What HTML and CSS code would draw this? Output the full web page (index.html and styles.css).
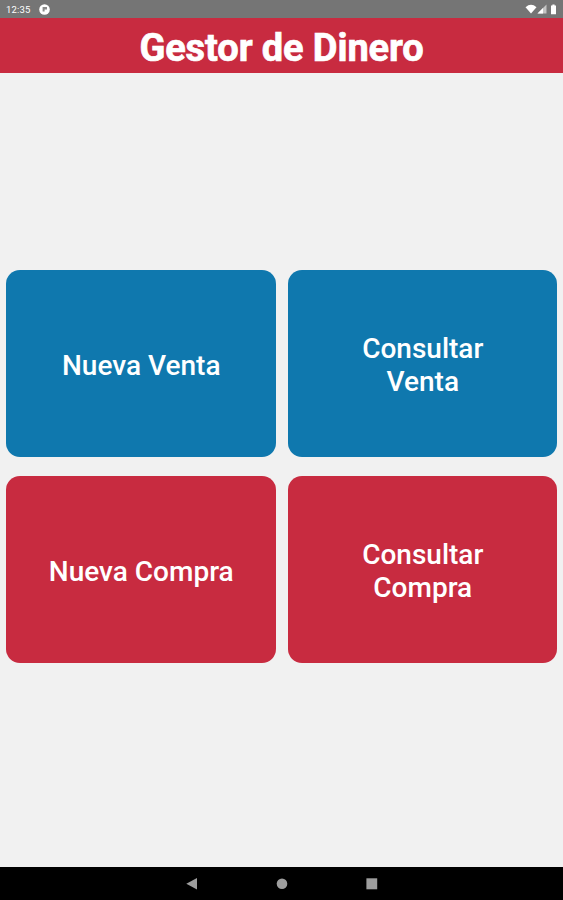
FILE: index.html
```html
<!DOCTYPE html>
<html lang="es">
  <head>
    <meta charset="UTF-8" />
    <title>Gestor de Dinero</title>
    <link rel="stylesheet" href="styles.css">
  </head>
  <body>
    <div class="status-bar">
      <span class="clock">12:35</span>
      <svg class="app-icon" width="11" height="11" viewBox="0 0 11 11">
        <circle cx="5.5" cy="5.5" r="5.3" fill="#fff" />
        <path d="M3.6 3H8V5.6H5.6V7.6H3.6z" fill="#8a8a8a" />
      </svg>
      <svg class="signal-icons" width="34" height="12" viewBox="0 0 34 12">
        <path d="M0.5 4.2Q6 -0.5 11.5 4.2L6 10.6z" fill="#fff" />
        <path d="M21.5 1.5V10.5H12.5z" fill="#c4c4c4" />
        <path d="M18 5V10.5H12.5z" fill="#fff" />
        <path d="M26 2.4h1.4V1.4h2.2v1h1.4v8.8h-5z" fill="#fff" />
      </svg>
    </div>

    <h1>Gestor de Dinero</h1>

    <div class="menu">
      <button class="venta">Nueva Venta</button>
      <button class="venta">Consultar<br>Venta</button>
      <button class="compra">Nueva Compra</button>
      <button class="compra">Consultar<br>Compra</button>
    </div>

    <div class="nav-bar">
      <svg width="12" height="14" viewBox="0 0 12 14">
        <path d="M0.3 6.7L11 0.9V12.5z" fill="#9e9e9e" />
      </svg>
      <svg width="12" height="14" viewBox="0 0 12 14">
        <circle cx="6" cy="6.7" r="5.3" fill="#9e9e9e" />
      </svg>
      <svg width="12" height="14" viewBox="0 0 12 14">
        <rect x="0.4" y="1.3" width="10.8" height="11" fill="#9e9e9e" />
      </svg>
    </div>
  </body>
</html>
```
FILE: styles.css
```css
body {
  font-family: Roboto, "Liberation Sans", sans-serif;
  background-color: #f1f1f1;
  color: #fff;
  display: flex;
  flex-direction: column;
  height: 100vh;
  margin: 0;
  overflow: hidden;
}
.status-bar {
  display: flex;
  align-items: center;
  height: 18px;
  padding: 0 4px 0 6px;
  background-color: #757575;
}
.clock {
  font-size: 9.5px;
  letter-spacing: 0.2px;
}
.app-icon {
  margin-left: 8px;
}
.signal-icons {
  margin-left: auto;
  margin-bottom: 1px;
}
h1 {
  margin: 0;
  height: 55px;
  line-height: 60px;
  background-color: #c82b40;
  text-align: center;
  font-size: 38px;
  font-weight: bold;
  letter-spacing: -0.1px;
  -webkit-text-stroke: 0.7px #fff;
}
.menu {
  flex: 1;
  display: grid;
  grid-template-columns: 1fr 1fr;
  grid-auto-rows: 187px;
  align-content: center;
  gap: 19px 12px;
  padding: 0 6px 7px;
}
.menu button {
  padding: 3px 0 0 1px;
  border: none;
  border-radius: 14px;
  color: #fff;
  font-family: inherit;
  font-size: 28px;
  font-weight: 500;
  line-height: 33px;
}
.menu .venta {
  background-color: #0f78ae;
}
.menu .compra {
  background-color: #c82b40;
}
.nav-bar {
  display: flex;
  justify-content: center;
  align-items: center;
  gap: 78px;
  height: 33px;
  background-color: #000;
}
```
